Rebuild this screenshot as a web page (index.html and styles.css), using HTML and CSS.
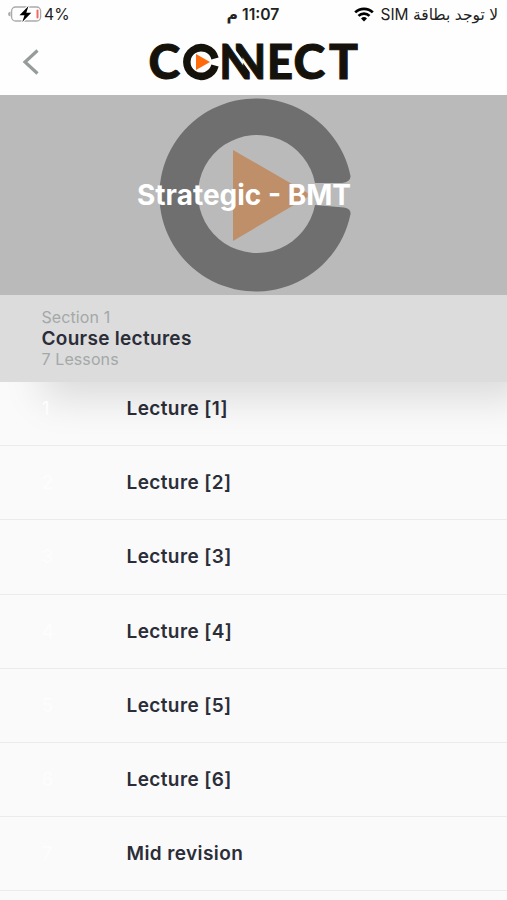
FILE: index.html
```
<!DOCTYPE html>
<html lang="en">
  <head>
    <meta charset="UTF-8" />
    <meta name="viewport" content="width=device-width, initial-scale=1.0" />
    <title>Strategic - BMT</title>
    <link rel="stylesheet" href="styles.css">
  </head>
  <body>
    <header class="top">
      <div class="status-bar">
        <div class="battery">
          <svg width="34" height="18" viewBox="0 0 34 18">
            <path d="M2.500 6.500v5Q0 11 0 9t2.500-2.500z" fill="#aaa" />
            <rect x="3.600" y="2" width="29" height="14" rx="4" fill="none" stroke="#aaa" stroke-width="1.300" />
            <rect x="28.500" y="4.500" width="2" height="9" rx="1" fill="#ef6a62" />
            <path d="M20.500 1l-9 9.200h5l-2.200 6.800 9-9.300h-5z" fill="#000" stroke="#fff" stroke-width="2.400" paint-order="stroke" />
          </svg>
          <span>4%</span>
        </div>
        <div class="time" dir="rtl"><span dir="ltr">11:07</span> م</div>
        <div class="carrier">
          <svg width="20" height="15" viewBox="0 0 20 15" fill="none" stroke="#000" stroke-width="2.700">
            <path d="M1.200 5.400a12.500 12.500 0 0 1 17.600 0" />
            <path d="M4.500 8.900a7.900 7.900 0 0 1 11 0" />
            <path d="M10 14.500l-3-3.100a4.300 4.300 0 0 1 6 0z" fill="#000" stroke="none" />
          </svg>
          <span dir="rtl">لا توجد بطاقة SIM</span>
        </div>
      </div>
      <nav class="nav">
        <svg class="back" width="18" height="28" viewBox="0 0 18 28">
          <path d="M15.500 2.500L3 14l12.500 11.500" fill="none" stroke="#969c9c" stroke-width="3.200" />
        </svg>
        <svg class="logo" width="216" height="66" viewBox="-2 -11 216 66">
          <defs>
            <!-- the two N share one double diagonal -->
            <clipPath id="first-n"><path d="M68 0h11l3 5 23 31.500V44H68z" /></clipPath>
            <clipPath id="second-n"><path d="M80 0h44v44h-14.500l-1.500-6L84 5z" /></clipPath>
          </defs>
          <g class="logo-text">
            <text x="0.500" y="39">C</text>
            <text x="71.500" y="39" textLength="33" lengthAdjust="spacingAndGlyphs" clip-path="url(#first-n)">N</text>
            <text x="85" y="39" textLength="33" lengthAdjust="spacingAndGlyphs" clip-path="url(#second-n)">N</text>
            <text x="119" y="39" textLength="26" lengthAdjust="spacingAndGlyphs">E</text>
            <text x="145.500" y="39">C</text>
            <text x="181" y="39">T</text>
          </g>
          <path d="M67 18.500a14.300 14.300 0 1 0 0 7" fill="none" stroke="#15120c" stroke-width="7.500" />
          <path d="M48 14v16l14-8z" fill="#ff6a0c" />
        </svg>
      </nav>
    </header>

    <div class="banner">
      <svg class="banner-art" width="200" height="200" viewBox="0 0 200 200">
        <path d="M197.500 81A96.500 96.500 0 1 0 197.500 119Q198 113.500 191 112.500L162 110A59 59 0 1 1 162 88L189 88Q198 87 197.500 81z" fill="#6f6f6f" />
        <path d="M80 55v91l78-46z" fill="#bf8f69" />
      </svg>
      <h1>Strategic - BMT</h1>
    </div>

    <section class="section-head">
      <p>Section 1</p>
      <h2>Course lectures</h2>
      <p>7 Lessons</p>
    </section>

    <ul class="lessons">
      <li><span class="number">1</span>Lecture [1]</li>
      <li><span class="number">2</span>Lecture [2]</li>
      <li><span class="number">3</span>Lecture [3]</li>
      <li><span class="number">4</span>Lecture [4]</li>
      <li><span class="number">5</span>Lecture [5]</li>
      <li><span class="number">6</span>Lecture [6]</li>
      <li><span class="number">7</span>Mid revision</li>
    </ul>
  </body>
</html>
```
FILE: styles.css
```
* {
  box-sizing: border-box;
}
body {
  margin: 0;
  height: 900px;
  overflow: hidden;
  background-color: #fafafa;
  color: #2b2d38;
  font-family: Inter, "Noto Sans", "DejaVu Sans", sans-serif;
}
svg {
  display: block;
}
.top {
  height: 95px;
  background-color: #fefefe;
}
.status-bar {
  display: grid;
  grid-template-columns: 1fr auto 1fr;
  align-items: center;
  height: 28px;
  padding: 0 9px 0 8px;
  font-size: 15.7px;
  color: #222;
}
.battery {
  display: flex;
  align-items: center;
  gap: 2px;
}
.time {
  font-weight: 600;
}
.carrier {
  display: flex;
  align-items: center;
  justify-content: flex-end;
  gap: 6px;
  font-size: 15.5px;
  white-space: nowrap;
}
.nav {
  display: flex;
  align-items: center;
  height: 67px;
  padding-left: 22px;
}
.logo {
  margin-left: 106px;
}
.logo-text {
  font-family: Lato, sans-serif;
  font-size: 48px;
  font-weight: 900;
  fill: #15120c;
  stroke: #15120c;
  stroke-width: 1;
}
.banner {
  position: relative;
  z-index: 2;
  display: grid;
  place-items: center;
  height: 200px;
  background-color: #bababa;
}
.banner-art,
.banner h1 {
  grid-area: 1 / 1;
}
.banner-art {
  margin-right: 2px;
}
.banner h1 {
  margin: 0 19px 0 0;
  color: white;
  font-size: 28px;
  font-weight: 700;
}
.section-head {
  position: relative;
  z-index: 1;
  height: 87px;
  padding: 12px 41px 0 41.5px;
  background-color: #dcdcdc;
  box-shadow: 32px 26px 40px -10px rgba(0, 0, 0, 0.13);
}
.section-head p,
.section-head h2 {
  margin: 0;
  line-height: 21px;
}
.section-head p {
  color: #a3a8a8;
  font-size: 16px;
  letter-spacing: 0.1px;
}
.section-head h2 {
  font-size: 19px;
  font-weight: 600;
  letter-spacing: 0.3px;
}
.lessons {
  margin: -10px 0 0;
  padding: 0;
  list-style: none;
}
.lessons li {
  display: flex;
  align-items: center;
  height: 74.2px;
  padding-left: 42px;
  border-bottom: 1px solid #ebebeb;
  font-size: 19px;
  font-weight: 600;
  letter-spacing: 0.4px;
}
/* sits above the shadow of the section header */
.number {
  position: relative;
  z-index: 2;
  width: 84.5px;
  color: #fdfdfd;
  font-size: 18px;
  font-weight: 500;
}
```
